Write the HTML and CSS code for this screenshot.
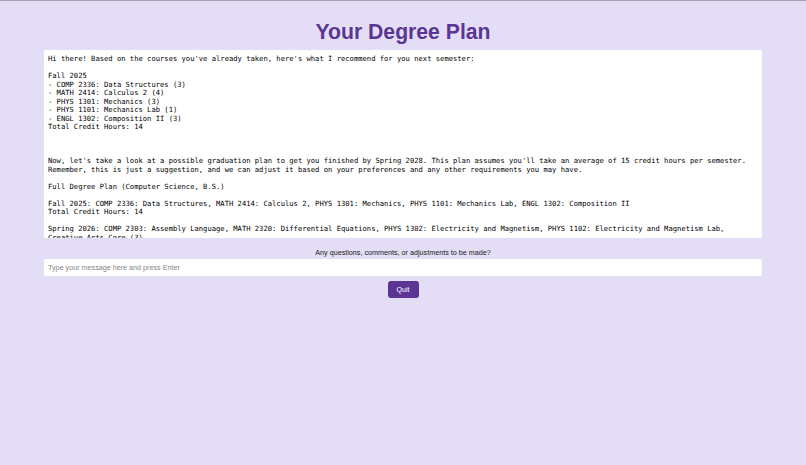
FILE: index.html
```html
<!DOCTYPE html>
<html lang="en">
<head>
<meta charset="utf-8">
<title>Your Degree Plan</title>
<link rel="stylesheet" href="styles.css">
</head>
<body>
<main class="page">
  <h1 class="title">Your Degree Plan</h1>
  <div class="chat-log">Hi there! Based on the courses you've already taken, here's what I recommend for you next semester:

Fall 2025
- COMP 2336: Data Structures (3)
- MATH 2414: Calculus 2 (4)
- PHYS 1301: Mechanics (3)
- PHYS 1101: Mechanics Lab (1)
- ENGL 1302: Composition II (3)
Total Credit Hours: 14



Now, let's take a look at a possible graduation plan to get you finished by Spring 2028. This plan assumes you'll take an average of 15 credit hours per semester.
Remember, this is just a suggestion, and we can adjust it based on your preferences and any other requirements you may have.

Full Degree Plan (Computer Science, B.S.)

Fall 2025: COMP 2336: Data Structures, MATH 2414: Calculus 2, PHYS 1301: Mechanics, PHYS 1101: Mechanics Lab, ENGL 1302: Composition II
Total Credit Hours: 14

Spring 2026: COMP 2303: Assembly Language, MATH 2320: Differential Equations, PHYS 1302: Electricity and Magnetism, PHYS 1102: Electricity and Magnetism Lab,
Creative Arts Core (3)</div>
  <p class="prompt">Any questions, comments, or adjustments to be made?</p>
  <input class="message" type="text" placeholder="Type your message here and press Enter">
  <button class="quit" type="button">Quit</button>
</main>
</body>
</html>
```

FILE: styles.css
```css
html {
  background: #e3def5;
}
body {
  margin: 0;
  border-top: 1px solid #a7a2b8;
  background: #e3def5;
  font-family: "Liberation Sans", Arial, sans-serif;
  height: 464px;
  overflow: hidden;
}
.page {
  display: flex;
  flex-direction: column;
  align-items: center;
  padding: 0 44px;
}
.title {
  margin: 17px 0 4px;
  font-size: 21.2px;
  line-height: 28px;
  font-weight: bold;
  color: #5b3594;
}
.chat-log {
  box-sizing: border-box;
  width: 100%;
  height: 188px;
  background: #ffffff;
  border-radius: 2px;
  padding: 5px 4px 4px;
  font-family: "DejaVu Sans Mono", Menlo, monospace;
  font-size: 7.17px;
  line-height: 8.5px;
  color: #000000;
  white-space: pre-wrap;
  overflow: hidden;
}
.prompt {
  margin: 10px 0 1px;
  font-size: 7.2px;
  line-height: 10px;
  color: #1a1a1a;
}
.message {
  box-sizing: border-box;
  width: 100%;
  height: 17px;
  margin: 0;
  padding: 0 4px;
  border: none;
  border-radius: 2px;
  background: #ffffff;
  font-family: "Liberation Sans", Arial, sans-serif;
  font-size: 7.2px;
  outline: none;
}
.message::placeholder {
  color: #858585;
}
.quit {
  margin-top: 5px;
  width: 31px;
  height: 17px;
  padding: 0;
  border: none;
  border-radius: 3px;
  background: #5b3494;
  color: #ffffff;
  font-family: "Liberation Sans", Arial, sans-serif;
  font-size: 7px;
}
```
